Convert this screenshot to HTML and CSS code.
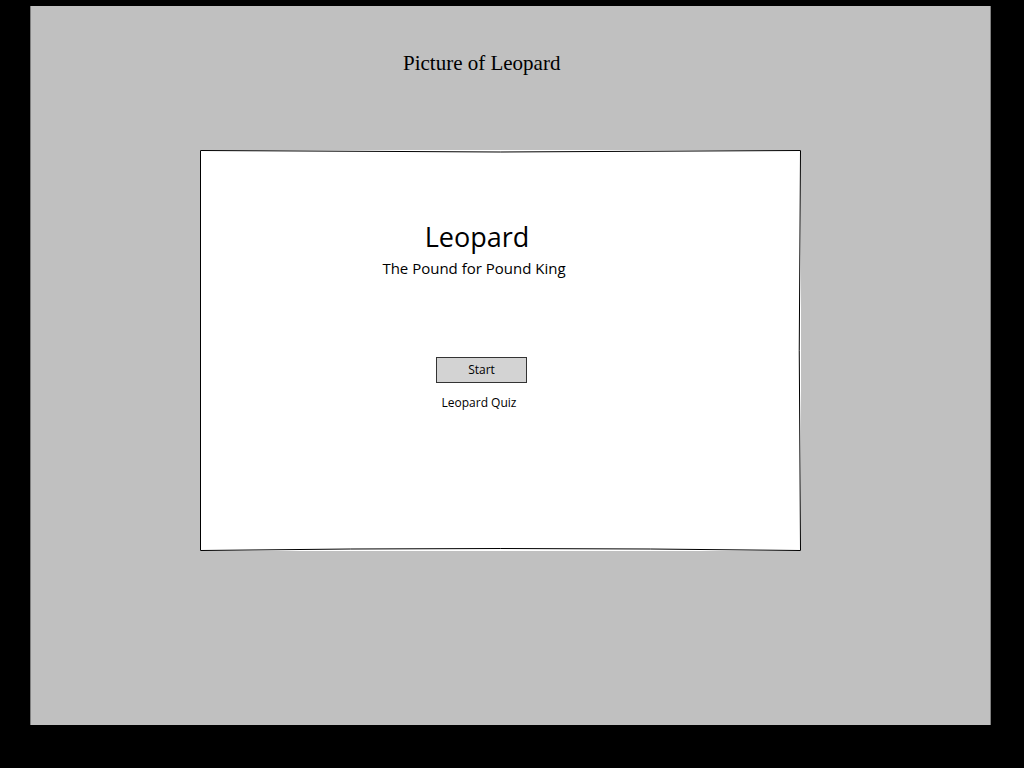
FILE: index.html
```html
<!DOCTYPE html>
<html>
<head>
<meta charset="utf-8">
<title>Picture of Leopard</title>
<link rel="stylesheet" href="styles.css">
</head>
<body>
<div class="panel">
  <div class="title">Picture of Leopard</div>
  <div class="card">
    <svg class="frame" viewBox="0 0 601 401" preserveAspectRatio="none" aria-hidden="true">
      <path d="M0.5,0.5 Q300,3.5 600.5,0.5 Q598,200 600.5,400.5 Q300,396.5 0.5,400.5 Z" fill="none" stroke="#000" stroke-width="1"/>
    </svg>
    <div class="content">
      <div class="heading">Leopard</div>
      <div class="subtitle">The Pound for Pound King</div>
      <div class="start">Start</div>
      <div class="quiz">Leopard Quiz</div>
    </div>
  </div>
</div>
</body>
</html>
```
FILE: styles.css
```css
html, body {
  margin: 0;
  padding: 0;
  background: #000;
}
body {
  width: 1024px;
  height: 768px;
  overflow: hidden;
}
.panel {
  margin-left: 30px;
  margin-top: 6px;
  width: 959px;
  height: 719px;
  background: #c0c0c0;
  border-left: 1px solid #808080;
  border-right: 1px solid #808080;
  overflow: hidden;
}
.title {
  margin-top: 45px;
  margin-left: 372px;
  height: 24px;
  font-family: "Liberation Serif", "Times New Roman", serif;
  font-size: 21px;
  line-height: 24px;
  color: #000;
}
.card {
  position: relative;
  margin-top: 75px;
  margin-left: 169px;
  width: 601px;
  height: 401px;
  background: #fff;
}
.frame {
  position: absolute;
  left: 0;
  top: 0;
  width: 601px;
  height: 401px;
}
.content {
  display: flex;
  flex-direction: column;
  align-items: center;
  width: 300px;
  margin-left: 127px;
  padding-top: 69px;
  font-family: "Open Sans", "Noto Sans", sans-serif;
  color: #000;
}
.heading {
  font-size: 27px;
  line-height: 36px;
}
.subtitle {
  font-size: 15px;
  line-height: 22px;
  margin-top: 2px;
  margin-right: 6px;
}
.start {
  box-sizing: border-box;
  margin-top: 78px;
  margin-left: 9px;
  width: 91px;
  height: 26px;
  background: #d3d3d3;
  border: 1px solid #333;
  font-size: 12px;
  line-height: 24px;
  text-align: center;
}
.quiz {
  margin-top: 11px;
  margin-left: 4px;
  font-size: 12px;
  line-height: 18px;
}
```
